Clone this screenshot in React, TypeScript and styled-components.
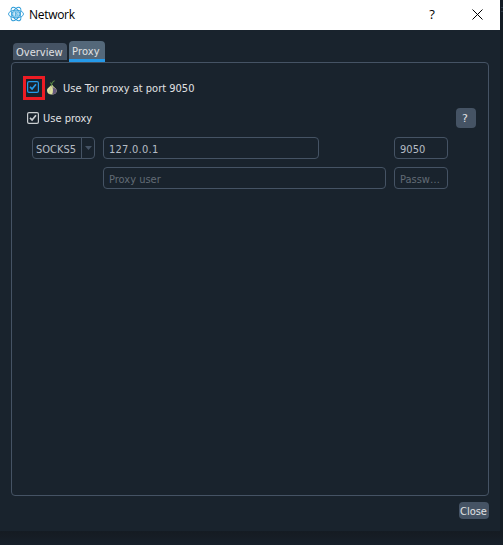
import React from 'react';
import styled, { createGlobalStyle } from 'styled-components';

const GlobalStyle = createGlobalStyle`
  * { box-sizing: border-box; }
  body { margin: 0; background: #17212b; overflow: hidden; }
`;

const Screen = styled.div`
  width: 503px;
  height: 545px;
  display: flex;
  align-items: flex-start;
  background: linear-gradient(#141c24 531px, #151b22 532px, #17202a 545px);
  font-family: 'DejaVu Sans Condensed', 'DejaVu Sans', sans-serif;
  font-stretch: condensed;
  font-size: 11px;
  color: #e0e1e3;
`;

const Dialog = styled.div`
  width: 500px;
  height: 531px;
  flex: none;
  background: #19232d;
  display: flex;
  flex-direction: column;
`;

const WindowEdge = styled.div`
  width: 2px;
  height: 5px;
  margin: 7px 0 0 1px;
  border-top: 1px solid #2c3947;
  border-bottom: 1px solid #2c3947;
`;

const TitleBar = styled.header`
  height: 30px;
  flex: none;
  background: #fff;
  color: #000;
  display: flex;
  align-items: center;
  padding: 0 17px 2px 8px;
  font: 12px 'Open Sans', 'Noto Sans', sans-serif;
`;

const Title = styled.span`
  margin-left: 5px;
  flex: 1;
  letter-spacing: -0.3px;
`;

const HelpGlyph = styled.span`
  width: 10px;
  margin-right: 35px;
  text-align: center;
  font-size: 13px;
  font-weight: 500;
`;

const Body = styled.main`
  flex: 1;
  display: flex;
  flex-direction: column;
  padding: 11px 11px 12px;
`;

const Tabs = styled.div`
  height: 21px;
  display: flex;
  align-items: flex-end;
  gap: 2px;
  padding-left: 2px;
`;

const Tab = styled.div<{ $active?: boolean }>`
  width: ${p => (p.$active ? 36 : 54)}px;
  height: ${p => (p.$active ? 21 : 17)}px;
  margin-bottom: ${p => (p.$active ? 0 : 2)}px;
  padding-left: 3px;
  line-height: ${p => (p.$active ? 21 : 19)}px;
  background: ${p => (p.$active ? '#54687a' : '#455364')};
  border-bottom: ${p => (p.$active ? '3px solid #259ae9' : '0')};
  border-radius: 4px 4px 0 0;
  white-space: nowrap;
`;

const Label = styled.span<{ $spacing?: number }>`
  letter-spacing: ${p => p.$spacing ?? 0}px;
  white-space: nowrap;
`;

const Panel = styled.section`
  height: 434px;
  border: 1px solid #455364;
  border-radius: 4px;
  padding: 13px 12px 0 11px;
`;

const TorRow = styled.div`
  height: 24px;
  display: flex;
  align-items: center;
`;

const Highlight = styled.div`
  width: 22px;
  height: 24px;
  border: 3px solid #ed1c24;
  display: flex;
  align-items: flex-start;
  padding: 2px 0 0 1px;
`;

const ProxyRow = styled.div`
  height: 20px;
  margin-top: 8px;
  padding-left: 4px;
  display: flex;
  align-items: center;
  line-height: 14px;

  > span { padding-top: 2px; }
`;

const HelpButton = styled.button`
  width: 20px;
  height: 20px;
  margin-left: auto;
  padding: 1px 2px 0 0;
  border: 0;
  border-radius: 4px;
  background: #455364;
  color: #e0e1e3;
  font: 11px 'DejaVu Sans', sans-serif;
`;

const Fields = styled.div`
  display: flex;
  flex-direction: column;
  gap: 8px;
  margin: 9px 0 0 9px;
`;

const FieldRow = styled.div<{ $indent?: number }>`
  display: flex;
  gap: 8px;
  height: 22px;
  padding-left: ${p => p.$indent ?? 0}px;
`;

const Field = styled.div<{ $width: number; $placeholder?: boolean; $end?: boolean }>`
  width: ${p => p.$width}px;
  margin-left: ${p => (p.$end ? 67 : 0)}px;
  border: 1px solid #455364;
  border-radius: 4px;
  padding-left: 5px;
  line-height: 23px;
  color: ${p => (p.$placeholder ? '#626b75' : '#b5bcc4')};
  white-space: nowrap;
`;

const Select = styled.div`
  width: 63px;
  border: 1px solid #455364;
  border-radius: 4px;
  display: flex;
  line-height: 23px;
  color: #b5bcc4;
`;

const SelectText = styled.div`
  width: 49px;
  height: 20px;
  padding-left: 3px;
  border-right: 1px solid #455364;
  white-space: nowrap;
`;

const Arrow = styled.svg`
  margin: 8px 0 0 3px;
`;

const CloseButton = styled.button`
  align-self: flex-end;
  width: 30px;
  height: 17px;
  margin-top: 6px;
  padding: 2px 0 0 1px;
  text-align: left;
  border: 0;
  border-radius: 4px;
  background: #455364;
  color: #e0e1e3;
  font: inherit;
  line-height: 15px;
`;

const Spacer = styled.div<{ $w: number }>`
  width: ${p => p.$w}px;
  flex: none;
`;

function CheckBox({ color }: { color: string }) {
  return (
    <svg width="12" height="12" viewBox="0 0 12 12" fill="none">
      <rect x=".6" y=".6" width="10.8" height="10.8" rx="1.4" stroke={color} strokeWidth="1.2" />
      <path d="M3 5.8 5.1 8 9 3.2" stroke={color} strokeWidth="1.7" />
    </svg>
  );
}

function AtomLogo() {
  return (
    <svg width="16" height="16" viewBox="0 0 16 16" fill="none" stroke="#2b9bd8" strokeWidth=".9">
      <ellipse cx="8" cy="8" rx="7.5" ry="3.8" />
      <ellipse cx="8" cy="8" rx="7.5" ry="3.8" transform="rotate(60 8 8)" />
      <ellipse cx="8" cy="8" rx="7.5" ry="3.8" transform="rotate(120 8 8)" />
      <circle cx="8" cy="8" r="3.2" fill="#d9effa" strokeWidth=".5" />
      <path d="M6.7 6H8.4Q9.6 6.1 9.4 7.2L8.5 7.9Q9.7 8.2 9.4 9.5L8.3 10H6.7M7.4 6V10M7.4 7.9H8.7" strokeWidth=".7" />
    </svg>
  );
}

function Onion() {
  return (
    <svg width="12" height="16" viewBox="0 0 12 16">
      <path d="M5 5C4.4 7 1 7.6 1 10.5C1 13.3 3 14.6 5.5 14.6C8.7 14.6 10.8 13 10.7 10.5C10.5 8 7.2 7.2 6.6 5Z" fill="#dde0a2" />
      <path d="M6 5.5C6.3 8 10.7 7.8 10.7 10.5C10.7 13 8.7 14.6 6 14.6C7.6 12 7 8 6 5.5Z" fill="#66597c" />
      <path d="M5.2 6.5C5.2 9 3 10 3.4 14" fill="none" stroke="#b9bd85" strokeWidth=".5" />
      <path d="M5.8 6.4C5.2 4 6.4 2 8.6 .6M5.6 4.2 4.2 2.5" fill="none" stroke="#578544" strokeWidth="1.1" />
    </svg>
  );
}

export default function App() {
  return (
    <Screen>
      <GlobalStyle />
      <Dialog>
        <TitleBar>
          <AtomLogo />
          <Title>Network</Title>
          <HelpGlyph>?</HelpGlyph>
          <svg width="11" height="11" viewBox="0 0 11 11" fill="none" stroke="#000">
            <path d="M.5.5 10.5 10.5M10.5.5.5 10.5" strokeWidth="1" />
          </svg>
        </TitleBar>
        <Body>
          <Tabs>
            <Tab><Label>Overview</Label></Tab>
            <Tab $active><Label $spacing={0.15}>Proxy</Label></Tab>
          </Tabs>
          <Panel>
            <TorRow>
              <Highlight><CheckBox color="#259ae9" /></Highlight>
              <Spacer $w={1} />
              <Onion />
              <Spacer $w={5} />
              <Label>Use Tor proxy at port 9050</Label>
            </TorRow>
            <ProxyRow>
              <CheckBox color="#c9cdd0" />
              <Spacer $w={4} />
              <Label>Use proxy</Label>
              <HelpButton>?</HelpButton>
            </ProxyRow>
            <Fields>
              <FieldRow>
                <Select>
                  <SelectText><Label>SOCKS5</Label></SelectText>
                  <Arrow width="7" height="4" viewBox="0 0 7 4"><path d="M0 0H7L3.5 4Z" fill="#455364" /></Arrow>
                </Select>
                <Field $width={216}><Label $spacing={0.25}>127.0.0.1</Label></Field>
                <Field $width={54} $end><Label $spacing={0.05}>9050</Label></Field>
              </FieldRow>
              <FieldRow $indent={71}>
                <Field $width={283} $placeholder><Label>Proxy user</Label></Field>
                <Field $width={54} $placeholder><Label>Passw…</Label></Field>
              </FieldRow>
            </Fields>
          </Panel>
          <CloseButton><Label>Close</Label></CloseButton>
        </Body>
      </Dialog>
      <WindowEdge />
    </Screen>
  );
}
